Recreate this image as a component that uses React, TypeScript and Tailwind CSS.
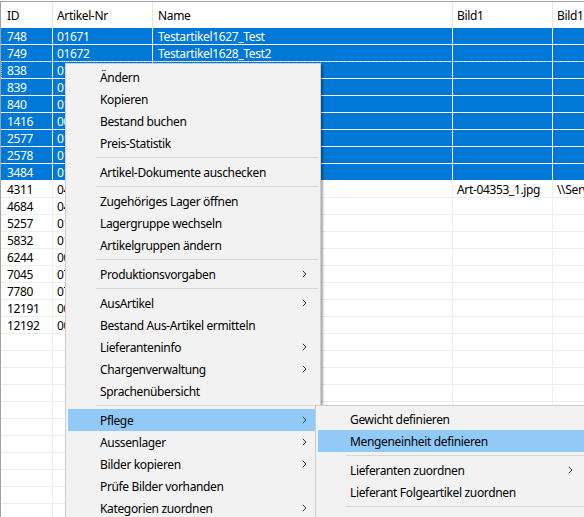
import React from 'react'

interface Row {
  id?: string
  nr?: string
  name?: string
  bild?: string
  pfad?: string
  sel?: boolean
}

const rows: Row[] = [
  { id: '748', nr: '01671', name: 'Testartikel1627_Test', sel: true },
  { id: '749', nr: '01672', name: 'Testartikel1628_Test2', sel: true },
  { id: '838', nr: '01015', sel: true },
  { id: '839', nr: '01016', sel: true },
  { id: '840', nr: '01017', sel: true },
  { id: '1416', nr: '00987', sel: true },
  { id: '2577', nr: '01288', sel: true },
  { id: '2578', nr: '01289', sel: true },
  { id: '3484', nr: '01766', sel: true },
  { id: '4311', nr: '04353', bild: 'Art-04353_1.jpg', pfad: '\\\\Server\\Bilder' },
  { id: '4684', nr: '04512' },
  { id: '5257', nr: '01890' },
  { id: '5832', nr: '01345' },
  { id: '6244', nr: '00562' },
  { id: '7045', nr: '07213' },
  { id: '7780', nr: '07510' },
  { id: '12191', nr: '00015' },
  { id: '12192', nr: '00016' },
]

while (rows.length < 30) rows.push({})

type Item = { label: string; sub?: boolean; active?: boolean } | 'sep'

const menu: Item[] = [
  { label: 'Ändern' },
  { label: 'Kopieren' },
  { label: 'Bestand buchen' },
  { label: 'Preis-Statistik' },
  'sep',
  { label: 'Artikel-Dokumente auschecken' },
  'sep',
  { label: 'Zugehöriges Lager öffnen' },
  { label: 'Lagergruppe wechseln' },
  { label: 'Artikelgruppen ändern' },
  'sep',
  { label: 'Produktionsvorgaben', sub: true },
  'sep',
  { label: 'AusArtikel', sub: true },
  { label: 'Bestand Aus-Artikel ermitteln' },
  { label: 'Lieferanteninfo', sub: true },
  { label: 'Chargenverwaltung', sub: true },
  { label: 'Sprachenübersicht' },
  'sep',
  { label: 'Pflege', sub: true, active: true },
  { label: 'Aussenlager', sub: true },
  { label: 'Bilder kopieren', sub: true },
  { label: 'Prüfe Bilder vorhanden' },
  { label: 'Kategorien zuordnen', sub: true },
]

const pflege: Item[] = [
  { label: 'Gewicht definieren' },
  { label: 'Mengeneinheit definieren', active: true },
  'sep',
  { label: 'Lieferanten zuordnen', sub: true },
  { label: 'Lieferant Folgeartikel zuordnen' },
  'sep',
]

function Chevron() {
  return (
    <svg width="5" height="8" viewBox="0 0 5 8" className="shrink-0">
      <polyline points="0.8,0.8 4,4 0.8,7.2" fill="none" stroke="#333" strokeWidth="1" />
    </svg>
  )
}

function MenuList({ items, wide }: { items: Item[]; wide?: boolean }) {
  return (
    <div className="flex flex-col pt-[2px]">
      {items.map((it, i) =>
        it === 'sep' ? (
          <div key={i} className="flex h-[7px] items-center pl-[30px] pr-[2px]">
            <div className="h-px w-full bg-[#d7d7d7]" />
          </div>
        ) : (
          <div
            key={i}
            className={`ml-[2px] mr-[4px] flex h-[22px] items-center justify-between pl-[32px] ${
              wide ? 'pr-[17px]' : 'pr-[9px]'
            } ${it.active ? 'bg-[#91c9f7]' : ''}`}
          >
            <span className="whitespace-nowrap pt-px">{it.label}</span>
            {it.sub && <Chevron />}
          </div>
        )
      )}
    </div>
  )
}

export default function App() {
  return (
    <div
      className="relative h-[517px] w-[584px] overflow-hidden bg-white pt-px text-[12px] leading-4 tracking-[-0.35px] text-black"
      style={{ fontFamily: '"Noto Sans", "Open Sans", sans-serif' }}
    >
      <div className="border-l border-t border-[#a0a0a0]">
        <div className="grid h-[26px] grid-cols-[52px_100px_300px_100px_1fr] items-center">
          <div className="h-full border-r border-[#e5e5e5] pl-[6px] pt-[6px]">ID</div>
          <div className="h-full border-r border-[#e5e5e5] pl-[4px] pt-[6px]">Artikel-Nr</div>
          <div className="h-full border-r border-[#e5e5e5] pl-[5px] pt-[6px]">Name</div>
          <div className="h-full border-r border-[#e5e5e5] pl-[4px] pt-[6px]">Bild1</div>
          <div className="h-full overflow-hidden whitespace-nowrap pl-[4px] pt-[6px]">Bild1Pfad</div>
        </div>
        {rows.map((r, i) => (
          <div
            key={i}
            className={`relative grid h-[17px] grid-cols-[52px_100px_300px_100px_1fr] ${
              r.sel ? 'bg-[#0078d7] text-white' : ''
            }`}
          >
            {[r.id, r.nr, r.name, r.bild, r.pfad].map((v, j) => (
              <div
                key={j}
                className={`overflow-hidden whitespace-nowrap border-b pt-px ${j < 4 ? 'border-r' : ''} ${
                  r.sel ? 'border-white' : 'border-[#eeeeee]'
                } ${j === 0 ? 'pl-[6px]' : j === 2 ? 'pl-[5px]' : 'pl-[4px]'}`}
              >
                {v}
              </div>
            ))}
            {i === 2 && (
              <div className="pointer-events-none absolute inset-x-0 -top-px h-[17px] border-l border-t border-dotted border-[#a8d0f2]" />
            )}
          </div>
        ))}
      </div>

      <div className="absolute left-[65px] top-[63px] w-[256px] border border-[#cccccc] bg-[#f2f2f2] shadow-[2px_2px_2px_rgba(0,0,0,0.35)]">
        <MenuList items={menu} />
      </div>

      <div className="absolute left-[315px] top-[405px] z-10 h-[140px] w-[280px] border border-[#cccccc] bg-[#f2f2f2] shadow-[2px_2px_2px_rgba(0,0,0,0.35)]">
        <MenuList items={pflege} wide />
      </div>
    </div>
  )
}
